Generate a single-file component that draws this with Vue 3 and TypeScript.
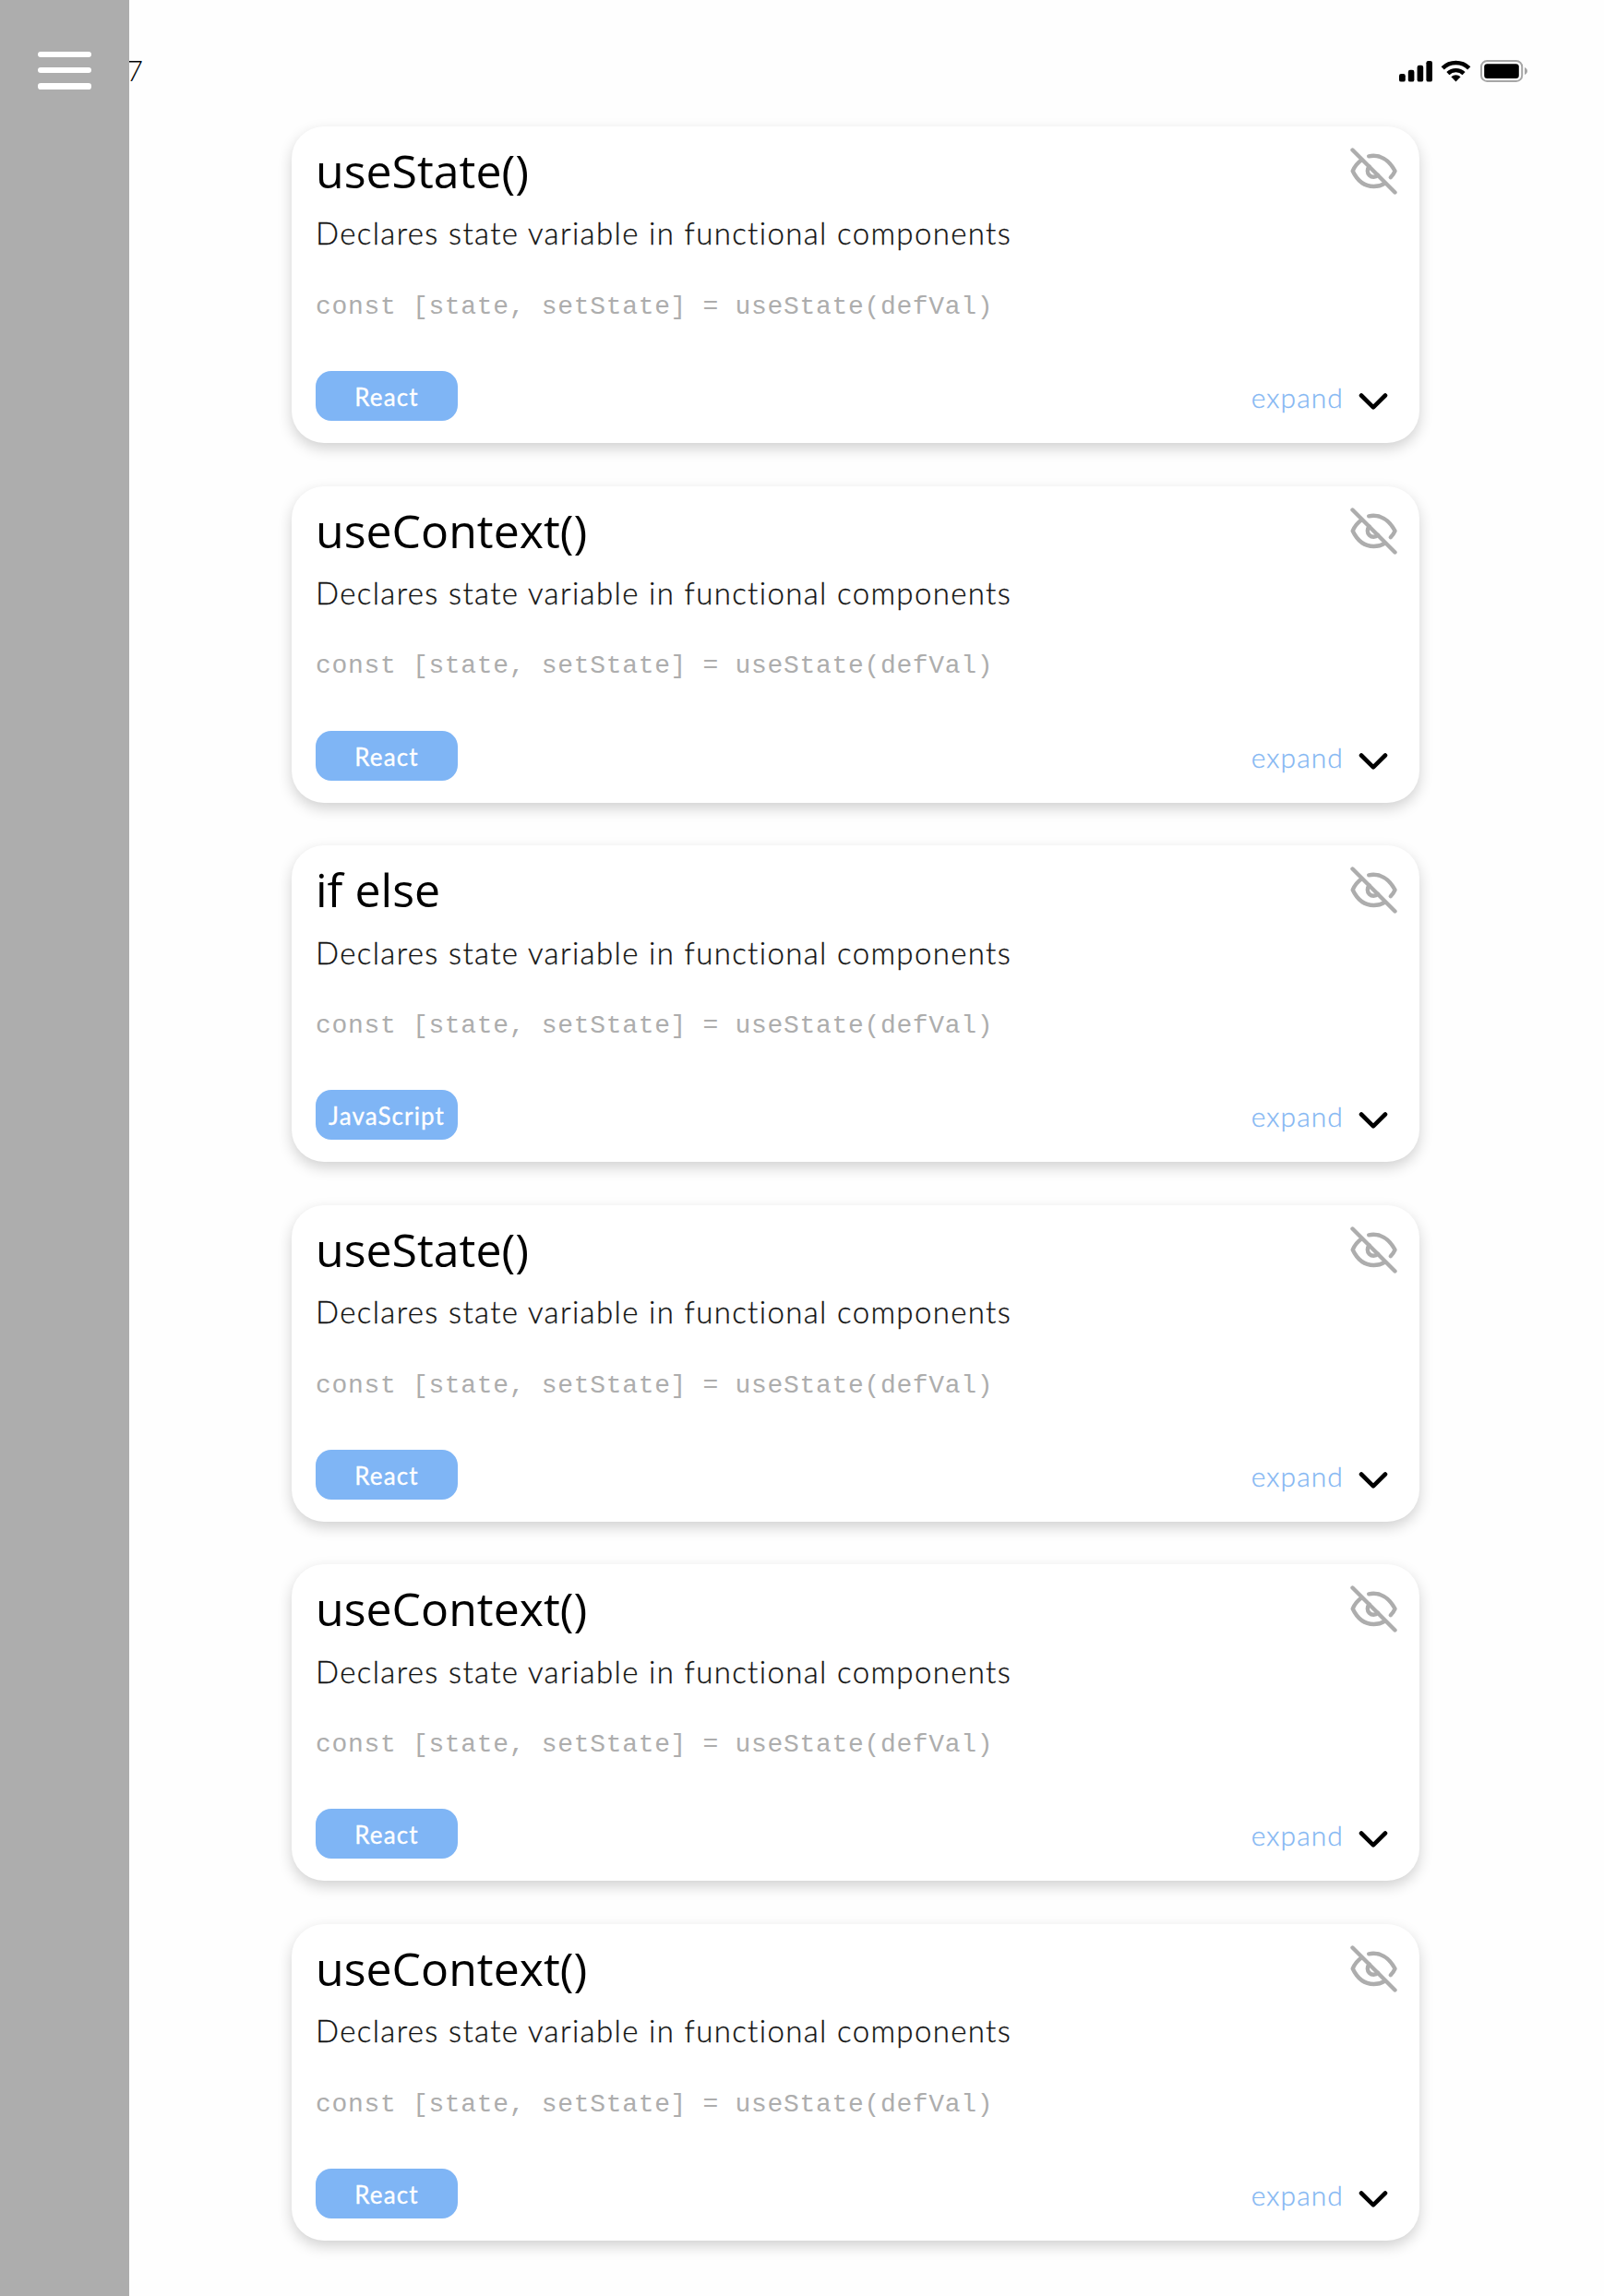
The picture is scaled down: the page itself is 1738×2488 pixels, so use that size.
<script setup lang="ts">
interface Card {
  title: string
  tag: string
}

const description = 'Declares state variable in functional components'
const snippet = 'const [state, setState] = useState(defVal)'

const cards: Card[] = [
  { title: 'useState()', tag: 'React' },
  { title: 'useContext()', tag: 'React' },
  { title: 'if else', tag: 'JavaScript' },
  { title: 'useState()', tag: 'React' },
  { title: 'useContext()', tag: 'React' },
  { title: 'useContext()', tag: 'React' },
]
</script>

<template>
  <div class="app">
    <aside class="sidebar">
      <button class="menu" aria-label="Menu">
        <span></span>
        <span></span>
        <span></span>
      </button>
    </aside>
    <div class="content">
      <header class="status">
        <span class="clock">7</span>
        <div class="indicators">
          <svg class="signal" width="36" height="23" viewBox="0 0 36 23">
            <rect x="0" y="14" width="6.8" height="8.6" rx="2.2" />
            <rect x="9.8" y="9.7" width="6.6" height="12.9" rx="2.2" />
            <rect x="19.6" y="4.8" width="6.6" height="17.8" rx="2.2" />
            <rect x="29.4" y="0" width="6.6" height="22.6" rx="2.2" />
          </svg>
          <svg class="wifi" width="33" height="24" viewBox="0 0 33 24">
            <path d="M2.2 8.8a20.5 20.5 0 0 1 28.6 0" fill="none" stroke="#000" stroke-width="4.6" />
            <path d="M7.9 14.6a12.4 12.4 0 0 1 17.2 0" fill="none" stroke="#000" stroke-width="4.4" />
            <path d="M11.4 18.2a7.5 7.5 0 0 1 10.2 0L16.5 23.4z" />
          </svg>
          <svg class="battery" width="51" height="24" viewBox="0 0 51 24">
            <rect x="1" y="1" width="44.2" height="22" rx="6.3" fill="none" stroke="#a6a6a6" stroke-width="2" />
            <rect x="4.2" y="4.2" width="37.6" height="15.8" rx="3.2" />
            <path d="M48 8c4 1.4 4 6.600 0 8z" fill="#a6a6a6" />
          </svg>
        </div>
      </header>
      <main class="cards">
        <article v-for="(card, i) in cards" :key="i" class="card">
          <div class="top">
            <h2>{{ card.title }}</h2>
            <svg class="hide" width="52" height="52" viewBox="0 0 52 52">
              <path d="M3.500 3.500L49.500 49.500" />
              <path d="M13.500 14.300C9.500 17 6 21 3.700 26.300C9 37.500 17 43 26.500 43C31 43 35 41.800 38.300 39.800" />
              <path d="M21.200 10.300C33 8 43 14 49.500 26.300C48.300 29 46.800 31.200 44.800 33.200" />
              <path d="M21.700 21.600A6.300 6.300 0 1 0 31 30.800" />
            </svg>
          </div>
          <p class="desc">{{ description }}</p>
          <code class="code">{{ snippet }}</code>
          <div class="bottom">
            <span class="tag">{{ card.tag }}</span>
            <a class="expand">
              <span>expand</span>
              <svg width="32" height="20" viewBox="0 0 32 20">
                <path d="M3 3.500L16 16.300L29 3.500" />
              </svg>
            </a>
          </div>
        </article>
      </main>
    </div>
  </div>
</template>

<style>
body {
  background: #fefefe;
}
</style>

<style scoped>
.app {
  display: flex;
  width: 1738px;
  height: 2488px;
  overflow: hidden;
  background: #fefefe;
}

.sidebar {
  flex: none;
  width: 139.5px;
  background: #adadad;
}

.menu {
  display: flex;
  flex-direction: column;
  gap: 11px;
  margin: 56px 0 0 41px;
  padding: 0;
  border: 0;
  background: none;
}

.menu span {
  width: 58px;
  height: 6.2px;
  border-radius: 3.1px;
  background: #fff;
}

.content {
  flex: 1;
  display: flex;
  flex-direction: column;
  overflow: hidden;
}

.status {
  display: flex;
  justify-content: space-between;
  height: 137px;
}

.clock {
  margin: 56px 0 0 -2.5px;
  font: 300 31px/40px Lato, sans-serif;
  color: #000;
}

.indicators {
  display: flex;
  align-items: flex-start;
  margin: 65px 83px 0 0;
}

.signal {
  margin-top: 1px;
}

.wifi {
  margin-left: 9.5px;
}

.battery {
  margin-left: 10px;
}

.cards {
  display: flex;
  flex-direction: column;
  gap: 46.6px;
  width: 1222px;
  margin-left: 176.5px;
}

.card {
  display: flex;
  flex-direction: column;
  box-sizing: border-box;
  height: 343px;
  padding: 18px 24.5px 0 26px;
  border-radius: 35px;
  background: #fff;
  box-shadow: 0 6px 15px rgba(0, 0, 0, 0.18);
}

.top {
  display: flex;
  justify-content: space-between;
  height: 60px;
}

h2 {
  margin: 0;
  font: 400 50px/60px 'Open Sans', 'Noto Sans', sans-serif;
  color: #000;
}

.hide {
  margin-top: 4px;
  fill: none;
  stroke: #adadad;
  stroke-width: 4.4px;
  stroke-linecap: round;
  stroke-linejoin: round;
}

.desc {
  margin: 17.4px 0 0;
  font: 300 33px/40px Lato, sans-serif;
  letter-spacing: 1.36px;
  color: #111;
  -webkit-text-stroke: 0.3px #111;
  white-space: nowrap;
}

.code {
  margin-top: 40.4px;
  font: 400 28px/40px 'Liberation Mono', monospace;
  letter-spacing: 0.68px;
  color: #adadad;
  white-space: pre;
}

.bottom {
  display: flex;
  justify-content: space-between;
  margin-top: 49.2px;
}

.tag {
  width: 154px;
  height: 54px;
  border-radius: 17px;
  background: #7fb5f5;
  color: #fff;
  -webkit-text-stroke: 0.3px #fff;
  font: 400 26px/57px Lato, sans-serif;
  letter-spacing: 1.1px;
  text-align: center;
}

.expand {
  display: flex;
  align-items: flex-start;
  margin-right: 9.5px;
  font: 300 30px/40px Lato, sans-serif;
  color: #84b7f3;
  -webkit-text-stroke: 0.3px #84b7f3;
}

.expand span {
  margin-top: 8px;
  letter-spacing: 1.1px;
}

.expand svg {
  margin: 23px 0 0 16px;
  fill: none;
  stroke: #000;
  stroke-width: 4.6px;
  stroke-linecap: round;
  stroke-linejoin: round;
}
</style>
